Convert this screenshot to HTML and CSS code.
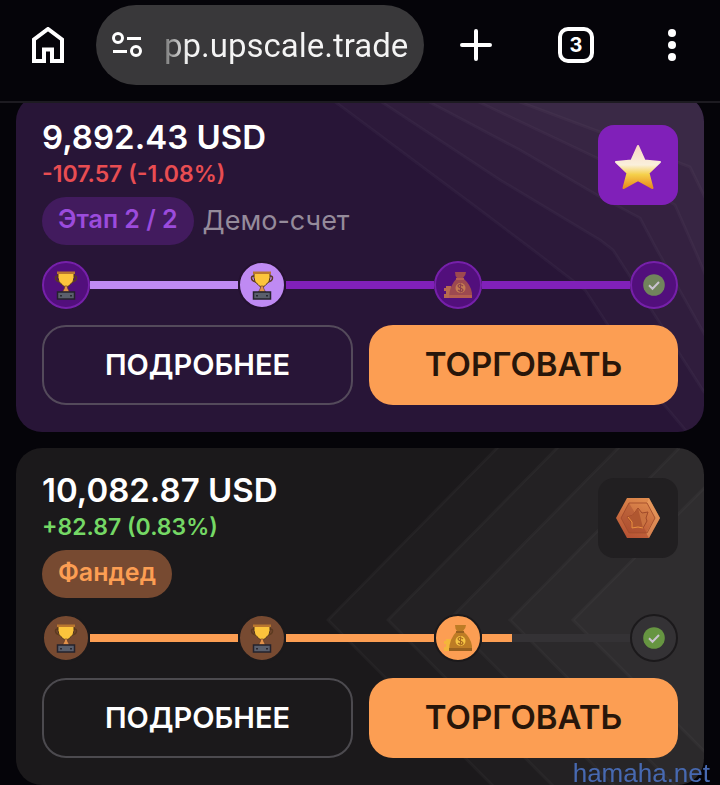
FILE: index.html
```html
<!DOCTYPE html>
<html lang="ru">
<head>
<meta charset="utf-8">
<meta name="viewport" content="width=device-width, initial-scale=1">
<title>Upscale</title>
<link rel="stylesheet" href="styles.css">
</head>
<body>
<svg class="defs" aria-hidden="true">
  <defs>
    <linearGradient id="star-fill" x1="0" y1="0" x2="0" y2="1">
      <stop offset="0" stop-color="#f9d9c4"/><stop offset=".45" stop-color="#faf0dc"/><stop offset=".68" stop-color="#f5d04a"/><stop offset="1" stop-color="#e88a1c"/>
    </linearGradient>
    <linearGradient id="bronze" x1=".7" y1="0" x2=".3" y2="1">
      <stop offset="0" stop-color="#e08c4e"/><stop offset="1" stop-color="#b65233"/>
    </linearGradient>
    <symbol id="trophy" viewBox="0 0 24 30">
      <path d="M5 6H3.500Q1.500 6 1.500 8Q1.500 11.500 7 12M19 6h1.500Q22.500 6 22.500 8Q22.500 11.500 17 12" fill="none" stroke="#5c3a20" stroke-width="1.500"/>
      <path d="M4 2.500h16v5q0 5-4 7l-2.500 2.500h-3L8 14.500q-4-2-4-7z" fill="#fcc43c" stroke="#4d321d"/>
      <path d="M3 1.500h18v2.500H3z" fill="#b9762f"/>
      <path d="M10.500 16h3v2l2 4h-7l2-4z" fill="#e2914a" stroke="#573521" stroke-width=".6"/>
      <path d="M3.500 22h17v7h-17z" fill="#5a5f6c" stroke="#25232c" stroke-width="1.500"/>
      <path d="M6 25h2v1.500H6zm10 0h2v1.500h-2z" fill="#292832"/>
    </symbol>
    <symbol id="bag" viewBox="0 0 30 28">
      <path class="coins" d="M3 15h5v3h2v9H1v-4h2v-3H1v-3h2z"/>
      <path class="sack" d="M12 1h11q0 3-3 6q8 7 9 15v5H6q0-12 8-20q-2-2-2-6z"/>
      <path class="shade" d="M13 7h8v2h-8zM6 24h23v3H6z"/>
      <circle class="seal" cx="17.500" cy="17" r="5"/>
      <path class="mark" d="M20 15q-4-3-5 0q0 1 2.500 2t2.500 2q-1 3-5 0M17.500 12.500v9" />
    </symbol>
    <symbol id="check" viewBox="0 0 22 22">
      <circle class="disc" cx="11" cy="11" r="10.800"/>
      <path class="tick" d="M6 11.200l3.500 3.500 6.500-6.700" fill="none" stroke-width="2"/>
    </symbol>
  </defs>
</svg>

<header class="browser">
  <button class="nav home" type="button" aria-label="Home">
    <svg width="32" height="36" viewBox="0 0 32 36"><path d="M2 34V12.500L16 2l14 10.500V34H20V22.500h-8V34z" fill="none" stroke="#fff" stroke-width="4"/></svg>
  </button>
  <div class="address">
    <svg width="30" height="26" viewBox="0 0 30 26" fill="none" stroke="#fff" stroke-width="3"><circle cx="6" cy="6" r="4.500"/><path d="M15 6.500h14M1 19.500h14"/><circle cx="24" cy="19" r="4.500"/></svg>
    <a class="url" href="#">pp.upscale.trade</a>
  </div>
  <button class="nav plus" type="button" aria-label="New tab">
    <svg width="32" height="32" viewBox="0 0 32 32"><path d="M16 2v28M2 16h28" stroke="#fff" stroke-width="4" stroke-linecap="round"/></svg>
  </button>
  <button class="nav tabs" type="button">3</button>
  <button class="nav more" type="button" aria-label="Menu">
    <svg width="8" height="32" viewBox="0 0 8 32" fill="#fff"><circle cx="4" cy="4" r="4"/><circle cx="4" cy="16" r="4"/><circle cx="4" cy="28" r="4"/></svg>
  </button>
</header>

<main class="accounts">
  <article class="card violet">
    <svg class="pattern" viewBox="0 0 688 337" preserveAspectRatio="xMaxYMid slice" aria-hidden="true">
      <path d="M310 0L464 115L517 155L569 195L629 287L671 337H700V-5H310z"/>
      <path d="M355 0L484 85L584 145L597 155L688 297H700V-5z"/>
      <path d="M400 0L504 55L581 100L624 123L641 155L690 242H700V-5z"/>
      <path d="M448 0L581 63L659 110L681 160L700 205V-5z"/>
      <path d="M485 0L584 37L674 72L700 125V-5z"/>
    </svg>
    <div class="head">
      <div class="summary">
        <h2 class="balance">9,892.43 USD</h2>
        <p class="delta loss">-107.57 (-1.08%)</p>
        <div class="tags"><span class="badge">Этап 2 / 2</span><span class="kind">Демо-счет</span></div>
      </div>
      <div class="medal">
        <svg width="50" height="48" viewBox="0 -2 50 48"><path d="M25 3l6.500 14.500 15.500 1.500-11.500 11 4 15L25 37l-14.500 8 4-15L3 19l15.500-1.500z" fill="url(#star-fill)" stroke="url(#star-fill)" stroke-width="2" stroke-linejoin="round"/></svg>
      </div>
    </div>
    <div class="track">
      <span class="step"><svg width="24" height="30"><use href="#trophy"/></svg></span>
      <span class="line done"></span>
      <span class="step current"><svg width="24" height="30"><use href="#trophy"/></svg></span>
      <span class="line"></span>
      <span class="step"><svg width="30" height="28"><use href="#bag"/></svg></span>
      <span class="line"></span>
      <span class="step"><svg width="22" height="22"><use href="#check"/></svg></span>
    </div>
    <div class="actions">
      <button class="btn outline" type="button">ПОДРОБНЕЕ</button>
      <button class="btn solid" type="button">ТОРГОВАТЬ</button>
    </div>
  </article>

  <article class="card graphite">
    <svg class="pattern" viewBox="0 0 688 337" preserveAspectRatio="xMaxYMid slice" aria-hidden="true">
      <path d="M483 -2L312 172L479 340H700V-2z"/>
      <path d="M543 -2L372 172L539 340H700V-2z"/>
      <path d="M604 -2L433 172L600 340H700V-2z"/>
      <path d="M665 -2L494 172L661 340H700V-2z"/>
      <path d="M700 28L557 172L700 315z"/>
    </svg>
    <div class="head">
      <div class="summary">
        <h2 class="balance">10,082.87 USD</h2>
        <p class="delta gain">+82.87 (0.83%)</p>
        <div class="tags"><span class="badge">Фандед</span></div>
      </div>
      <div class="medal">
        <svg width="44" height="40" viewBox="0 0 44 40">
          <path d="M11 0h22l11 20-11 20H11L0 20z" fill="url(#bronze)"/>
          <path d="M33 0l11 20-11 20-3-5 9-15-8-15z" fill="#f0a668" opacity=".5"/>
          <path d="M13 5h18l8 15-8 15H13L5 20z" fill="none" stroke="#a9522f" stroke-width="1"/>
          <path d="M13 5L5 20l8 15h18z" fill="#993f28" opacity=".35"/>
          <path d="M22 10l4 5 6-1-2 6 1 3-4 7-5-1-6 1-1-6-4-5 6-2z" fill="#c97240" stroke="#a04a2a"/>
          <path d="M22 10l-5 7-6 2 4 5 1 6h6l5 0z" fill="#b05730"/>
          <path d="M12 19l4 5v6l6-1 5 1" fill="none" stroke="#ed9140" stroke-width="1"/>
        </svg>
      </div>
    </div>
    <div class="track">
      <span class="step"><svg width="24" height="30"><use href="#trophy"/></svg></span>
      <span class="line done"></span>
      <span class="step"><svg width="24" height="30"><use href="#trophy"/></svg></span>
      <span class="line done"></span>
      <span class="step current"><svg width="30" height="28"><use href="#bag"/></svg></span>
      <span class="line part"></span>
      <span class="step pending"><svg width="22" height="22"><use href="#check"/></svg></span>
    </div>
    <div class="actions">
      <button class="btn outline" type="button">ПОДРОБНЕЕ</button>
      <button class="btn solid" type="button">ТОРГОВАТЬ</button>
    </div>
  </article>
</main>
<div class="watermark">hamaha.net</div>
</body>
</html>
```
FILE: styles.css
```css
* { box-sizing: border-box; }
body {
  margin: 0;
  background: #050409;
  color: #fff;
  font-family: Inter, "Noto Sans", sans-serif;
}
.defs { position: absolute; width: 0; height: 0; }
svg { display: block; flex: none; }
button { font: inherit; color: inherit; cursor: pointer; }

.browser {
  position: relative;
  z-index: 1;
  display: flex;
  align-items: center;
  height: 103px;
  padding: 0 16px 11px;
  background: #050409;
  border-bottom: 2px solid #1d1b21;
}
.nav {
  display: grid;
  place-items: center;
  flex: none;
  width: 64px;
  height: 64px;
  padding: 0;
  background: none;
  border: 0;
}
.address {
  display: flex;
  align-items: center;
  flex: 1;
  gap: 22px;
  min-width: 0;
  height: 80px;
  margin: 0 20px 0 16px;
  padding: 0 16px;
  border-radius: 40px;
  background: #39383a;
}
.url {
  padding-top: 2px;
  color: #fff;
  font: 33px/40px Roboto, sans-serif;
  white-space: nowrap;
  text-decoration: none;
  background: linear-gradient(90deg, #777 0, #f4f4f4 24px);
  background-clip: text;
  -webkit-text-fill-color: transparent;
}
.plus { margin-right: 36px; }
.tabs {
  width: 36px;
  height: 36px;
  margin: 0 14px;
  border: 4px solid #fff;
  border-radius: 10px;
  font-size: 20px;
  font-weight: 700;
  line-height: 20px;
}
.more { margin: 0 0 0 32px; }

.accounts {
  display: grid;
  gap: 16px;
  margin-top: -8px;
  padding: 0 16px;
}
.card {
  position: relative;
  overflow: hidden;
  padding: 22px 26px 27px;
  border-radius: 26px;
}
.card > * { position: relative; }
.card > .pattern {
  position: absolute;
  inset: 0;
  width: 100%;
  height: 100%;
}
.violet {
  --coins: #b76950;
  --sack: #9d4950;
  --shade: #b45e50;
  --seal: #c47b52;
  --mark: #8a3f4d;
  --disc: #71845c;
  background: #281537;
}
.graphite {
  --coins: #f4b63b;
  --sack: #bd7c25;
  --shade: #99611f;
  --seal: #f6c443;
  --mark: #a8691f;
  --disc: #669541;
  background: #1b191b;
}
.pattern path {
  fill: #fff;
  fill-opacity: .02;
  stroke: #fff;
  stroke-opacity: .03;
  stroke-width: 3;
}
.head { display: flex; justify-content: space-between; }
.balance {
  margin: 0;
  font-size: 33px;
  font-weight: 600;
  line-height: 40px;
}
.delta {
  margin: 0 0 6px;
  font-size: 23px;
  font-weight: 600;
  line-height: 34px;
}
.loss { color: #e84d52; }
.gain { color: #75d865; }
.tags { display: flex; align-items: center; gap: 9px; }
.badge {
  height: 48px;
  padding: 0 16px;
  border-radius: 24px;
  font-size: 25px;
  font-weight: 600;
  line-height: 44px;
}
.violet .badge { background: #421b5e; color: #9b4bdc; }
.graphite .badge { background: #774a31; color: #fc9e53; }
.kind { color: #958b9b; font-size: 27px; line-height: 48px; }
.medal {
  display: grid;
  place-items: center;
  width: 80px;
  height: 80px;
  margin-top: 8px;
  border-radius: 16px;
}
.violet .medal { background: #8020b9; }
.graphite .medal { background: #211f21; }

.track { display: flex; align-items: center; margin: 16px 0; }
.step {
  display: grid;
  place-items: center;
  flex: none;
  width: 48px;
  height: 48px;
  border: 2px solid;
  border-radius: 50%;
}
.line { flex: 1; height: 8px; }
.violet .step { background: #520f7c; border-color: #7620aa; }
.violet .line { background: #8020b9; }
.violet .line.done { background: #bf8af3; }
.violet .step.current { background: #bf8af3; border-color: #241130; }
.graphite .step { background: #774a31; border-color: #1b191b; }
.graphite .step.current { background: #fc9e53; }
.graphite .step.pending { background: #343235; }
.graphite .line.done { background: #fc9e53; }
.graphite .line.part { background: linear-gradient(90deg, #fc9e53 20%, #343235 20%); }

.coins { fill: var(--coins); }
.sack { fill: var(--sack); }
.shade { fill: var(--shade); }
.seal { fill: var(--seal); }
.mark { fill: none; stroke: var(--mark); stroke-width: 1.2px; }
.disc { fill: var(--disc); }
.tick { stroke: #c9c3cf; }

.actions { display: grid; grid-template-columns: 311fr 309fr; gap: 16px; }
.btn {
  height: 80px;
  padding: 0 0 2px;
  border: 0;
  border-radius: 24px;
  font-weight: 600;
}
.outline { background: none; border: 2px solid #544a5b; font-size: 29px; }
.graphite .outline { border-color: #4c4a4f; }
.solid { background: #fc9e53; color: #28160a; font-size: 33px; }

.watermark {
  position: fixed;
  right: 10px;
  bottom: 0;
  color: #4769b1;
  font: 26px/24px "Liberation Sans", sans-serif;
}
```
